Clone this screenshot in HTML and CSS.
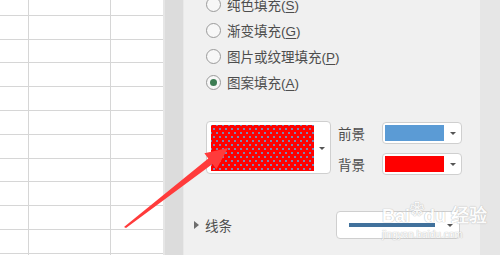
FILE: index.html
```html
<!DOCTYPE html>
<html lang="zh-CN">
<head>
  <meta charset="UTF-8">
  <title>填充</title>
  <link rel="stylesheet" href="styles.css">
</head>
<body>
  <div class="screen">
    <div class="sheet">
      <div class="row"><div class="cell c1"></div><div class="cell c2"></div><div class="cell c3"></div></div>
      <div class="row"><div class="cell c1"></div><div class="cell c2"></div><div class="cell c3"></div></div>
      <div class="row"><div class="cell c1"></div><div class="cell c2"></div><div class="cell c3"></div></div>
      <div class="row"><div class="cell c1"></div><div class="cell c2"></div><div class="cell c3"></div></div>
      <div class="row"><div class="cell c1"></div><div class="cell c2"></div><div class="cell c3"></div></div>
      <div class="row"><div class="cell c1"></div><div class="cell c2"></div><div class="cell c3"></div></div>
      <div class="row"><div class="cell c1"></div><div class="cell c2"></div><div class="cell c3"></div></div>
      <div class="row"><div class="cell c1"></div><div class="cell c2"></div><div class="cell c3"></div></div>
      <div class="row"><div class="cell c1"></div><div class="cell c2"></div><div class="cell c3"></div></div>
      <div class="row"><div class="cell c1"></div><div class="cell c2"></div><div class="cell c3"></div></div>
      <div class="row"><div class="cell c1"></div><div class="cell c2"></div><div class="cell c3"></div></div>
      <div class="row"><div class="cell c1"></div><div class="cell c2"></div><div class="cell c3"></div></div>
    </div>
    <div class="scroll"></div>

    <div class="panel">
      <div class="options">
        <label class="opt"><span class="radio"></span><span>纯色填充(<u>S</u>)</span></label>
        <label class="opt"><span class="radio"></span><span>渐变填充(<u>G</u>)</span></label>
        <label class="opt"><span class="radio"></span><span>图片或纹理填充(<u>P</u>)</span></label>
        <label class="opt"><span class="radio on"></span><span>图案填充(<u>A</u>)</span></label>
      </div>

      <div class="fill">
        <div class="swatch">
          <div class="pattern"></div>
          <span class="caret"></span>
        </div>
        <div class="colors">
          <div class="color-row">
            <span class="lbl">前景</span>
            <div class="pick"><div class="chip blue"></div><span class="caret"></span></div>
          </div>
          <div class="color-row">
            <span class="lbl">背景</span>
            <div class="pick"><div class="chip red"></div><span class="caret"></span></div>
          </div>
        </div>
      </div>

      <div class="line-row">
        <span class="tri"></span>
        <span class="lbl line-lbl">线条</span>
        <div class="line-pick"><div class="stroke"></div><span class="caret"></span></div>
      </div>
    </div>
    <div class="edge"></div>

    <!-- watermark -->
    <div class="wm">
      <div class="wm-top">Bai<span class="paw">❀</span>du 经验</div>
      <div class="wm-url">jingyan.baidu.com</div>
    </div>

    <!-- red pointer arrow -->
    <svg class="arrow" width="500" height="255" viewBox="0 0 500 255">
      <polygon points="124,227 208.3,158.5 204.4,153.3 228,148 216.4,169.3 212.5,164.1 126,228" fill="#ff3b3b"/>
    </svg>
  </div>
</body>
</html>
```

FILE: styles.css
```css
* { box-sizing:border-box; }
body { margin:0; background:#f0f0f0; font-family:"Liberation Sans","Noto Sans CJK SC",sans-serif; }
.screen { position:relative; width:500px; height:255px; overflow:hidden; display:flex; }

/* spreadsheet */
.sheet { width:165px; background:#fff; margin-top:-8px; display:flex; flex-direction:column; border-right:2px solid #e6e6e6; }
.row { display:flex; height:23.8px; flex-shrink:0; border-bottom:1px solid #d6d6d6; }
.cell { border-right:1px solid #d6d6d6; height:100%; }
.c1 { width:29px; }
.c2 { width:82px; }
.c3 { flex:1; border-right:none; }
.scroll { width:19px; background:#dcdcdc; border-right:1px solid #e9e9e9; }

/* task pane */
.panel { width:296px; padding-left:22px; color:#4d4d4d; font-size:13.5px; }
.edge { flex:1; background:#e6e6e6; }

.options { margin-top:-9px; display:flex; flex-direction:column; }
.opt { height:26px; display:flex; align-items:center; gap:6px; }
.opt u { text-underline-offset:2px; }
.radio { width:15px; height:15px; border-radius:50%; border:1px solid #9a9a9a; background:#f7f7f7; display:flex; align-items:center; justify-content:center; }
.radio.on::after { content:""; width:7px; height:7px; border-radius:50%; background:#3c7d53; }

.fill { display:flex; margin-top:26px; gap:7px; }
.swatch { width:125px; height:53px; background:#fff; border:1px solid #cfcfcf; border-radius:4px; display:flex; align-items:center; padding:3px 5px 2px 4px; gap:5px; }
.pattern { width:106px; height:46px; background-color:#ff0000;
  background-image:radial-gradient(circle, #7a86b4 0.7px, transparent 1.1px), radial-gradient(circle, #7a86b4 0.7px, transparent 1.1px);
  background-size:6px 8px; background-position:0 0, 3px 4px; }
.caret { width:0; height:0; border-left:3px solid transparent; border-right:3px solid transparent; border-top:3px solid #555; }

.colors { display:flex; flex-direction:column; gap:9px; margin-top:1px; }
.color-row { display:flex; align-items:center; gap:17px; }
.lbl { font-size:13.5px; color:#4d4d4d; }
.pick { width:80px; height:22px; background:#fff; border:1px solid #cfcfcf; border-radius:4px; display:flex; align-items:center; padding:2px 5px 2px 2px; gap:6px; }
.chip { width:63px; height:16px; }
.chip.blue { background:#5b9bd5; }
.chip.red { background:#ff0000; }

.line-row { display:flex; align-items:center; margin:36px 0 0 -12px; height:28px; }
.tri { width:0; height:0; border-top:4px solid transparent; border-bottom:4px solid transparent; border-left:5px solid #6d6d6d; margin-right:6px; }
.line-lbl { width:131px; }
.line-pick { width:124px; height:28px; background:#fff; border:1px solid #cfcfcf; border-radius:4px; display:flex; align-items:center; padding:0 6px 0 12px; gap:12px; }
.stroke { width:86px; height:4px; background:#41719c; }

/* watermark */
.wm { position:absolute; left:382px; top:204px; color:#fff; font-family:"Liberation Sans",sans-serif; opacity:0.85;
  text-shadow:0 0 1px #b5b5b5, 0 0 1px #b5b5b5; }
.wm-top { font-size:18px; font-weight:bold; line-height:24px; }
.paw { font-size:14px; position:relative; top:-8px; }
.wm-url { font-size:10px; line-height:12px; }

.arrow { position:absolute; left:0; top:0; pointer-events:none; }
```
